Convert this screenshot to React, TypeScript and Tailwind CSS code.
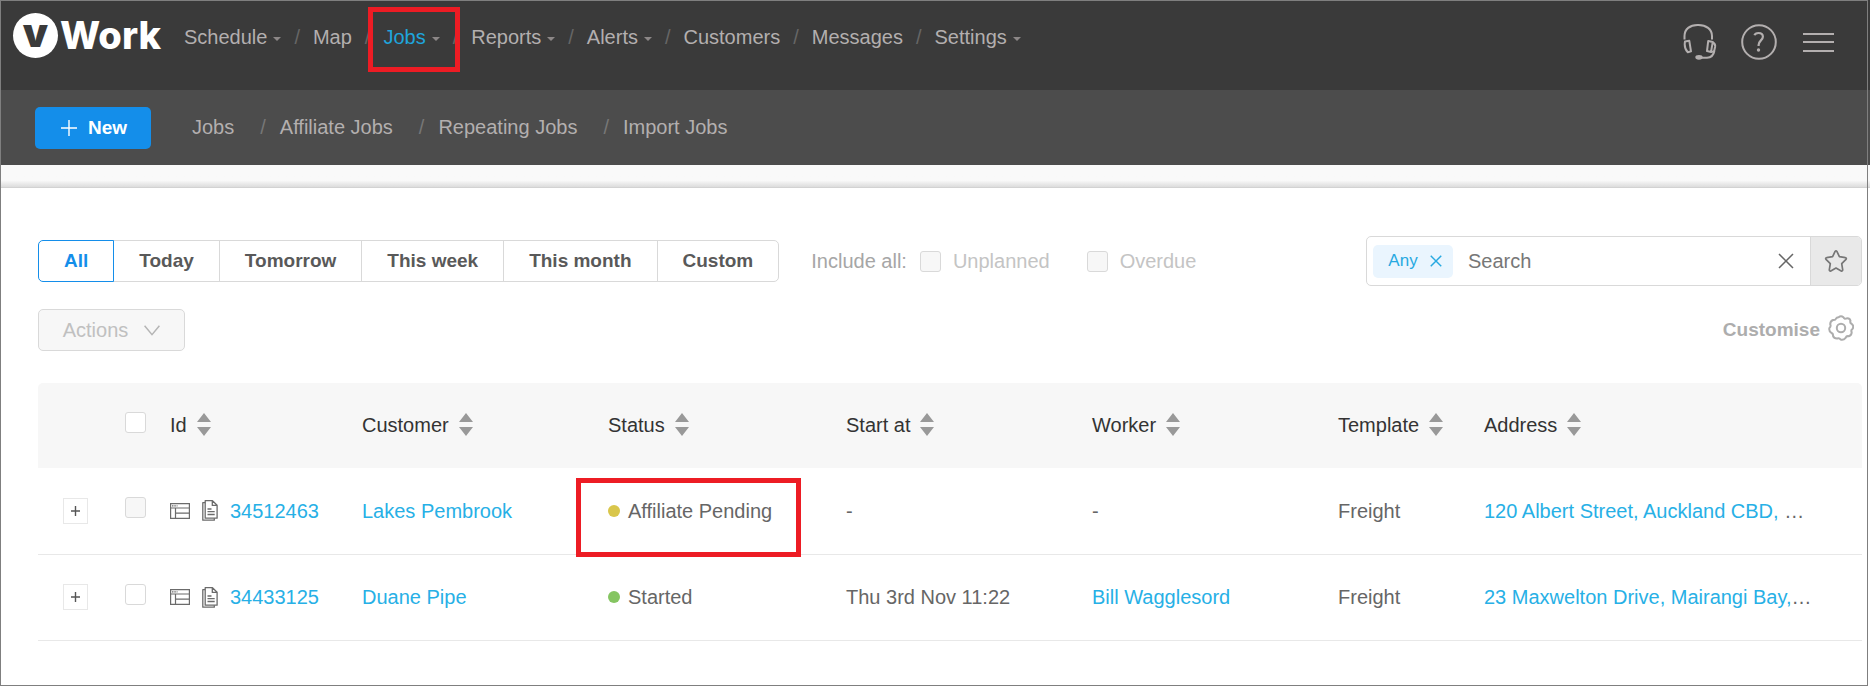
import { type ReactNode } from 'react';

interface NavItem {
    label: string;
    menu?: boolean;
    active?: boolean;
}

interface Job {
    id: string;
    customer: string;
    status: string;
    dot: string;
    startAt: string;
    worker?: string;
    template: string;
    address: string;
    locked?: boolean;
    highlight?: boolean;
}

const NAV: NavItem[] = [
    { label: 'Schedule', menu: true },
    { label: 'Map' },
    { label: 'Jobs', menu: true, active: true },
    { label: 'Reports', menu: true },
    { label: 'Alerts', menu: true },
    { label: 'Customers' },
    { label: 'Messages' },
    { label: 'Settings', menu: true },
];

const SUB_NAV = ['Jobs', 'Affiliate Jobs', 'Repeating Jobs', 'Import Jobs'];

const RANGES = ['All', 'Today', 'Tomorrow', 'This week', 'This month', 'Custom'];

const COLUMNS = ['Id', 'Customer', 'Status', 'Start at', 'Worker', 'Template', 'Address'];

const JOBS: Job[] = [
    {
        id: '34512463',
        customer: 'Lakes Pembrook',
        status: 'Affiliate Pending',
        dot: 'bg-[#d9c64b]',
        startAt: '-',
        template: 'Freight',
        address: '120 Albert Street, Auckland CBD, ',
        locked: true,
        highlight: true,
    },
    {
        id: '34433125',
        customer: 'Duane Pipe',
        status: 'Started',
        dot: 'bg-[#85c561]',
        startAt: 'Thu 3rd Nov 11:22',
        worker: 'Bill Wagglesord',
        template: 'Freight',
        address: '23 Maxwelton Drive, Mairangi Bay,',
    },
];

function Logo() {
    return (
        <a href="#" aria-label="vWork" className="flex items-center font-['Inter',sans-serif] font-extrabold text-white">
            <span className="flex h-[45px] w-[45px] items-center justify-center rounded-full bg-white pb-1 text-[40px] leading-none font-black text-[#3a3a3a]">v</span>
            <span className="ml-0.5 text-[38px] leading-[46px]">Work</span>
        </a>
    );
}

function HeadsetIcon() {
    return (
        <svg width="34" height="36" viewBox="0 0 34 36" fill="none" stroke="#b3afaf" strokeWidth="2" strokeLinejoin="round">
            <path d="M1.500 15.500V12C1.500 5 7 1 14.500 1h1C23 1 29 5 29 12v3.500" />
            <path d="M2 17.500l4.300-.7L8 27.300l-3.200.9C2.500 26 1.200 22 2 17.500z" />
            <path d="M25.200 17l4.600.9-1.800 10-4-.8z" />
            <path d="M29.800 18.500c2.200 1.200 2.700 2.500 2.300 4.500l-1 4.300-3.100.8" />
            <path d="M31.300 27c-.8 4.800-3 6.500-7.300 6.700h-7" />
            <ellipse cx="16" cy="33.300" rx="2.700" ry="1.400" fill="#b3afaf" />
        </svg>
    );
}

function HelpIcon() {
    return (
        <svg width="36" height="36" viewBox="0 0 36 36" fill="none" stroke="#b3afaf">
            <circle cx="18" cy="18" r="16.800" strokeWidth="2" />
            <path d="M13.500 11.300c.5-1.700 2-2.300 4-2.300 2.700 0 4.400 1.500 4.400 3.700 0 3.500-4.300 4-4.300 8.300v1" strokeWidth="2.200" />
            <circle cx="17.500" cy="26" r="1.700" fill="#b3afaf" stroke="none" />
        </svg>
    );
}

function MenuIcon() {
    return (
        <svg width="31" height="20" viewBox="0 0 31 20" fill="#b3afaf">
            <path d="M0 1h31v2H0zM0 9h31v2H0zM0 18h31v2H0z" />
        </svg>
    );
}

function CrossIcon({ size }: { size: number }) {
    return (
        <svg width={size} height={size} viewBox="0 0 16 16" fill="none" stroke="currentColor" strokeWidth={size > 12 ? 1.5 : 1.9}>
            <path d="M1 1l14 14M15 1L1 15" />
        </svg>
    );
}

function StarIcon() {
    return (
        <svg width="24" height="24" viewBox="0 0 24 24" fill="none" stroke="#777777" strokeWidth="1.700" strokeLinejoin="round">
            <path d="M12 1.800c.4 0 .7.300.900.600l2.500 5.300 6 .9c.9.100 1.200 1.100.6 1.700l-4.300 4.300 1 6.200c.1.900-.7 1.500-1.500 1.100L12 19.100l-5.200 2.800c-.8.400-1.600-.2-1.500-1.100l1-6.200L2 10.300c-.6-.6-.3-1.600.6-1.700l6-.9 2.500-5.300c.2-.3.500-.6.900-.6z" />
        </svg>
    );
}

function GearIcon() {
    return (
        <svg width="26" height="26" viewBox="0 0 26 26" fill="none" stroke="#adadad" strokeWidth="2" strokeLinejoin="round">
            <path d="M10.600 2.200Q13 .2 15.400 2.200Q16.300 4.400 18.400 3.400Q21.700 2.900 22.500 5.700Q21.600 8 23.800 9Q26.200 11 24.600 13.800Q22.600 15 23.700 17.200Q23.600 20.400 20.800 21.300Q18.500 20.600 17.600 22.900Q15.500 25.500 12.600 24.600Q11.400 22.500 9.200 23.500Q6 23.600 5 20.900Q5.500 18.600 3.200 17.700Q.7 15.800 1.400 13Q3.300 11.500 2.200 9.300Q2.200 6 5 5Q7.200 5.500 8.200 3.300Q9.200 2.200 10.600 2.200Z" />
            <circle cx="13" cy="13" r="4.200" />
        </svg>
    );
}

function SortIcon() {
    return (
        <svg width="14" height="23" viewBox="0 0 14 23" fill="#999999">
            <path d="M7 0l7 9H0zM7 23l7-9H0z" />
        </svg>
    );
}

function LayoutIcon() {
    return (
        <svg width="20" height="16" viewBox="0 0 20 16" fill="none" stroke="#6b6b6b" strokeWidth="1.200">
            <path d="M.6.6h18.800v14.800H.6zM.6 5h18.800M5.500 5v10.400M5.500 10.200h13.900" />
            <path d="M2 2.900h5.500" strokeDasharray="1.500 .8" />
        </svg>
    );
}

function DocumentsIcon() {
    return (
        <svg width="16" height="21" viewBox="0 0 16 21" fill="none" stroke="#6b6b6b" strokeWidth="1.300" strokeLinejoin="round">
            <path d="M3.200.7h7.300l4.600 4.500v13H3.200zM10.300.7v4.700h4.800" />
            <path d="M3.200 2.700H.8v17.500h11.500v-2M5.500 9h4M5.500 11.700h7.200M5.500 14.500h7.200" />
        </svg>
    );
}

// Red marker that sits on top of the thing being pointed out
function Marker({ className }: { className: string }) {
    return <span aria-hidden="true" className={`pointer-events-none absolute z-10 border-5 border-[#ed1c24] ${className}`} />;
}

function Checkbox({ label, disabled }: { label: string; disabled?: boolean }) {
    return (
        <input
            type="checkbox"
            aria-label={label}
            disabled={disabled}
            className="block h-[21px] w-[21px] shrink-0 appearance-none rounded-[3px] border border-[#d9d9d9] bg-white checked:bg-[#148eea] disabled:bg-[#f7f7f7]"
        />
    );
}

function JobLink({ children }: { children: ReactNode }) {
    return <a href="#" className="text-[#27b0e6]">{children}</a>;
}

function TopBar() {
    return (
        <header className="flex h-[90px] items-start justify-between bg-[#3a3a3a] pt-3 pr-9 pl-[13px]">
            <div className="flex items-start">
                <Logo />
                <nav className="ml-[23px] flex items-center pt-2.5">
                    {NAV.map((item, i) => (
                        <div key={item.label} className="flex items-center">
                            {i > 0 && <span className="mx-[13px] text-[#666666]">/</span>}
                            <a href="#" className={`relative flex items-center ${item.active ? 'text-[#1fa5dc]' : 'text-[#b3afaf]'}`}>
                                {item.label}
                                {item.menu && <span className="mt-1 ml-1.5 border-x-[4px] border-t-[4px] border-x-transparent border-t-[#8c8787]" />}
                                {item.active && <Marker className="-top-[15px] -left-[15px] h-[65px] w-[92px]" />}
                            </a>
                        </div>
                    ))}
                </nav>
            </div>
            <div className="flex items-center gap-6 pt-3">
                <button type="button" aria-label="Support"><HeadsetIcon /></button>
                <button type="button" aria-label="Help"><HelpIcon /></button>
                <button type="button" aria-label="Menu" className="ml-0.5"><MenuIcon /></button>
            </div>
        </header>
    );
}

function SubBar() {
    return (
        <div className="flex h-[75px] items-center bg-[#4c4c4c] pl-[35px]">
            <button type="button" className="flex h-[42px] w-[116px] items-center justify-center gap-[11px] rounded-[5px] bg-[#148eea] pl-0.5 text-[19px] font-bold text-white">
                <svg width="16" height="16" viewBox="0 0 16 16" stroke="currentColor" strokeWidth="1.400"><path d="M8 0v16M0 8h16" /></svg>
                New
            </button>
            <nav className="ml-[41px] flex items-center pb-0.5 text-[#b3afaf]">
                {SUB_NAV.map((label, i) => (
                    <div key={label} className="flex items-center">
                        {i > 0 && <span className="mr-[14px] ml-[26px] text-[#777777]">/</span>}
                        <a href="#">{label}</a>
                    </div>
                ))}
            </nav>
        </div>
    );
}

function Filters() {
    return (
        <div className="flex items-center justify-between">
            <div className="flex items-center">
                <div className="flex">
                    {RANGES.map((range) => (
                        <button
                            key={range}
                            type="button"
                            className="-ml-px h-[42px] border border-[#d9d9d9] px-[25px] text-[19px] font-bold text-[#595959] first:z-10 first:ml-0 first:rounded-l-[5px] first:border-[#148eea] first:text-[#148eea] last:rounded-r-[5px]"
                        >
                            {range}
                        </button>
                    ))}
                </div>
                <span className="ml-8 text-[#a6a6a6]">Include all:</span>
                <label className="ml-[13px] flex items-center gap-3 text-[#c4c4c4]">
                    <Checkbox label="Unplanned" disabled />
                    Unplanned
                </label>
                <label className="ml-[37px] flex items-center gap-3 text-[#c4c4c4]">
                    <Checkbox label="Overdue" disabled />
                    Overdue
                </label>
            </div>
            <div className="flex h-[50px] w-[496px] overflow-hidden rounded-[5px] border border-[#d9d9d9]">
                <div className="flex min-w-0 flex-1 items-center pl-1.5">
                    <button type="button" className="flex h-[33px] w-20 shrink-0 items-center justify-center gap-3 rounded-[5px] bg-[#eaf5fe] pl-1 text-[17px] text-[#27a9e1]">
                        Any
                        <CrossIcon size={12} />
                    </button>
                    <input type="text" aria-label="Search" placeholder="Search" className="ml-[15px] min-w-0 flex-1 outline-none placeholder:text-[#777777]" />
                    <button type="button" aria-label="Clear search" className="mr-4 text-[#666666]"><CrossIcon size={16} /></button>
                </div>
                <button type="button" aria-label="Save search" className="flex w-[51px] items-center justify-center border-l border-[#d9d9d9] bg-[#e9e9e9]">
                    <StarIcon />
                </button>
            </div>
        </div>
    );
}

function Toolbar() {
    return (
        <div className="mt-[23px] flex items-center justify-between">
            <button type="button" disabled className="flex h-[42px] w-[147px] items-center justify-center gap-4 rounded-[5px] border border-[#d9d9d9] bg-[#f7f7f7] text-[#c0c0c0]">
                Actions
                <svg width="16" height="11" viewBox="0 0 16 11" fill="none" stroke="#b5b5b5" strokeWidth="1.500"><path d="M.6.8L8 9.700 15.400.8" /></svg>
            </button>
            <button type="button" className="flex items-start gap-2 pr-2 text-[19px] font-bold text-[#adadad]">
                Customise
                <GearIcon />
            </button>
        </div>
    );
}

function JobsTable() {
    return (
        <table className="mt-8 w-full table-fixed text-left text-[#666666]">
            <colgroup>
                <col className="w-[87px]" />
                <col className="w-[45px]" />
                <col className="w-[192px]" />
                <col className="w-[246px]" />
                <col className="w-[238px]" />
                <col className="w-[246px]" />
                <col className="w-[246px]" />
                <col className="w-[146px]" />
                <col />
            </colgroup>
            <thead>
                <tr className="h-[85px] text-[#333333]">
                    <th className="rounded-tl-[5px] bg-[#f7f7f7]" />
                    <th className="bg-[#f7f7f7] pb-1.5"><Checkbox label="Select all jobs" /></th>
                    {COLUMNS.map((column) => (
                        <th key={column} className="bg-[#f7f7f7] pb-0.5 font-normal last:rounded-tr-[5px]">
                            <button type="button" className="flex items-center gap-[10px]">
                                {column}
                                <SortIcon />
                            </button>
                        </th>
                    ))}
                </tr>
            </thead>
            <tbody>
                {JOBS.map((job) => (
                    <tr key={job.id} className="h-[86px] border-b border-[#e8e8e8]">
                        <td className="pl-[25px]">
                            <button type="button" aria-label={`Expand job ${job.id}`} className="flex h-[26px] w-[25px] items-center justify-center border border-[#e8e8e8]">
                                <svg width="9" height="10" viewBox="0 0 9 10" stroke="#555555" strokeWidth="1.400"><path d="M4.500 0v10M0 5h9" /></svg>
                            </button>
                        </td>
                        <td className="pb-1.5"><Checkbox label={`Select job ${job.id}`} disabled={job.locked} /></td>
                        <td>
                            <div className="flex items-center">
                                <LayoutIcon />
                                <span className="mx-3"><DocumentsIcon /></span>
                                <JobLink>{job.id}</JobLink>
                            </div>
                        </td>
                        <td><JobLink>{job.customer}</JobLink></td>
                        <td>
                            <div className="relative flex items-center gap-2">
                                <span className={`h-3 w-3 rounded-full ${job.dot}`} />
                                {job.status}
                                {job.highlight && <Marker className="-top-[18px] -left-8 h-[79px] w-[225px]" />}
                            </div>
                        </td>
                        <td>{job.startAt}</td>
                        <td>{job.worker ? <JobLink>{job.worker}</JobLink> : '-'}</td>
                        <td>{job.template}</td>
                        <td className="whitespace-pre"><JobLink>{job.address}</JobLink>…</td>
                    </tr>
                ))}
            </tbody>
        </table>
    );
}

export default function App() {
    return (
        <div className="relative min-h-screen bg-white font-['Liberation_Sans',Arial,sans-serif] text-[20px] leading-[30px]">
            <TopBar />
            <SubBar />
            <div className="h-[23px] border-b border-[#d2d2d2] bg-linear-to-b from-[#f9f9f9] from-70% to-[#dcdcdc]" />
            <main className="pt-12 pr-2 pb-8 pl-[38px]">
                <Filters />
                <Toolbar />
                <JobsTable />
            </main>
            {/* Thin frame round the whole window */}
            <div aria-hidden="true" className="pointer-events-none absolute top-0 right-0.5 bottom-0.5 left-0 border border-[#7f7f7f]" />
        </div>
    );
}
